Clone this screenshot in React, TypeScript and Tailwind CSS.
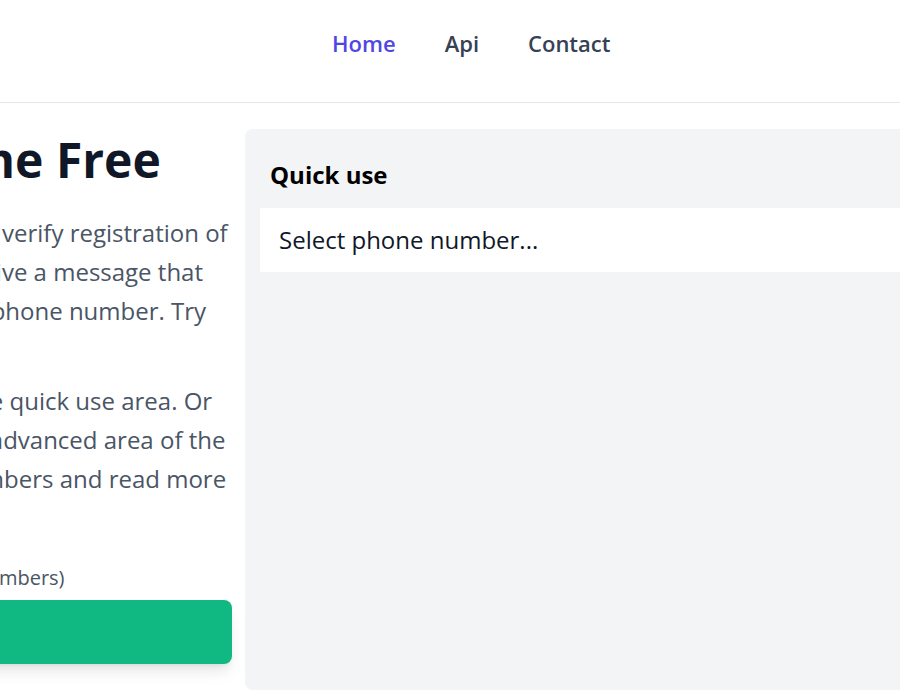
import { useState } from 'react';

const navLinks = [
  { label: 'Home', href: '#', active: true },
  { label: 'Api', href: '#api', active: false },
  { label: 'Contact', href: '#contact', active: false },
];

export default function App() {
  const [phone, setPhone] = useState('');

  return (
    <div className="h-[700px] w-full overflow-hidden bg-white font-['Open_Sans',sans-serif]">
      {/* Top navigation */}
      <nav className="flex h-[103px] items-center gap-[49px] border-b border-gray-200 pb-4 pl-[332px]">
        {navLinks.map((link) => (
          <a
            key={link.label}
            href={link.href}
            className={`text-[22px] font-semibold ${link.active ? 'text-[#4f46e5]' : 'text-gray-700'}`}
          >
            {link.label}
          </a>
        ))}
      </nav>

      <main className="flex gap-[13px] pt-[26px]">
        {/* Intro column */}
        <section className="-ml-[422px] w-[654px] shrink-0">
          <h1 className="mt-[1px] whitespace-nowrap text-5xl font-bold leading-[60px] text-gray-900">
            Receive SMS Online Free
          </h1>
          <p className="mt-[23px] whitespace-nowrap text-2xl leading-[39px] text-gray-600">
            Use the free phone numbers listed to verify registration of
            <br />
            on websites or apps and you will receive a message that
            <br />
            contains a code, sent to the selected phone number. Try
            <br />
            it now.
          </p>
          <p className="mt-3 whitespace-nowrap text-2xl leading-[39px] text-gray-600">
            Just choose one of the numbers in the quick use area. Or
            <br />
            scroll down this page, then go to the advanced area of the
            <br />
            website to see all of the available numbers and read more
            <br />
            about each of them.
          </p>
          <p className="mt-[27px] whitespace-nowrap text-xl leading-7 text-gray-600">
            (There are currently 148 active free phone numbers)
          </p>
          <button className="mt-2 h-16 w-full rounded-lg bg-[#10b981] text-xl font-semibold text-white shadow-lg">
            Advanced
          </button>
        </section>

        {/* Quick use panel */}
        <section className="h-[561px] w-[800px] shrink-0 rounded-lg bg-gray-100 px-[15px] pt-[30px]">
          <h2 className="px-[10px] text-2xl font-bold leading-8 text-black">Quick use</h2>
          <select
            value={phone}
            onChange={(e) => setPhone(e.target.value)}
            className="mt-[17px] h-16 w-full appearance-none bg-white px-[19px] text-2xl text-gray-900 outline-none"
          >
            <option value="">Select phone number...</option>
            <option value="+4915510686794">+49 1551 0686794</option>
            <option value="+447520635432">+44 7520 635432</option>
          </select>
        </section>
      </main>
    </div>
  );
}
